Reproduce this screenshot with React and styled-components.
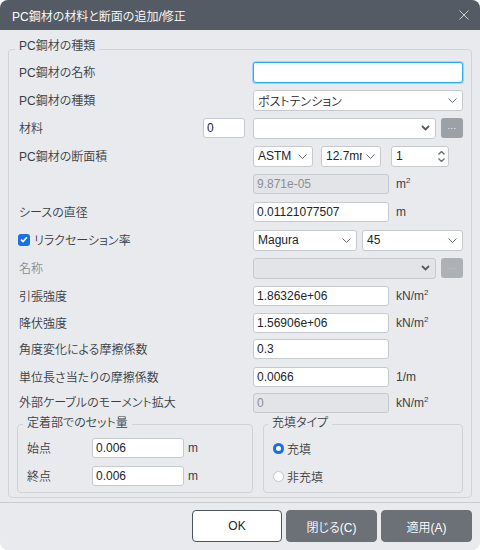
import React from "react";
import styled, { createGlobalStyle } from "styled-components";

const GlobalStyle = createGlobalStyle`
  * { box-sizing: border-box; }
  html, body { margin: 0; padding: 0; background: #fff; }
  body {
    font-family: "Liberation Sans", "Noto Sans CJK JP", sans-serif;
    font-size: 12px;
    font-weight: 350;
    font-feature-settings: "palt";
    color: #3a3f45;
  }
`;

const Dialog = styled.div`
  width: 480px;
  height: 550px;
  display: flex;
  flex-direction: column;
  background: #e9eaee;
  border-radius: 8px;
  overflow: hidden;
`;

const TitleBar = styled.div`
  flex: none;
  height: 30px;
  display: flex;
  align-items: center;
  justify-content: space-between;
  padding: 0 11px 0 12px;
  background: #545b64;
  color: #fff;
  font-size: 12px;
`;

const CloseButton = styled.button`
  display: flex;
  padding: 0;
  border: 0;
  background: none;
`;

const Body = styled.div`
  flex: 1;
  padding: 19px 8px 4px;
`;

const Group = styled.div`
  position: relative;
  border: 1px solid #cfd2d7;
  border-radius: 4px;
  padding: ${(p) => p.$pad};
`;

const Legend = styled.span`
  position: absolute;
  top: ${(p) => p.$top}px;
  left: ${(p) => p.$left}px;
  padding: 0 4px;
  line-height: 16px;
  background: #e9eaee;
  white-space: nowrap;
`;

const Row = styled.div`
  display: grid;
  grid-template-columns: 1fr 210px;
  align-items: center;
  height: ${(p) => p.$h || 28}px;
`;

const Label = styled.div`
  display: flex;
  align-items: center;
  justify-content: ${(p) => (p.$spread ? "space-between" : "flex-start")};
  gap: 4px;
  padding-bottom: ${(p) => p.$lift || 1}px;
  color: ${(p) => (p.$disabled ? "#8b8f94" : "#3a3f45")};
  white-space: nowrap;
`;

const Controls = styled.div`
  display: flex;
  align-items: center;
  gap: ${(p) => (p.$gap != null ? p.$gap : 5)}px;
`;

const Input = styled.input`
  flex: none;
  width: ${(p) => (p.$w ? `${p.$w}px` : "100%")};
  height: ${(p) => (p.$focus ? 21 : 20)}px;
  margin-right: ${(p) => p.$mr || 0}px;
  padding: 0 3px;
  border: 1px solid ${(p) => (p.$focus ? "#22aef0" : "#c6c9ce")};
  box-shadow: ${(p) => (p.$focus ? "0 0 0 1px rgba(34,174,240,0.35)" : "none")};
  border-radius: 3px;
  background: ${(p) => (p.disabled ? "#e3e4e7" : "#fff")};
  color: ${(p) => (p.disabled ? "#8b8f94" : "#212529")};
  font: inherit;
  outline: none;
`;

const Select = styled.div`
  flex: none;
  display: flex;
  align-items: center;
  width: ${(p) => (p.$w ? `${p.$w}px` : "100%")};
  height: 21px;
  padding: 0 5px 0 4px;
  border: 1px solid #c6c9ce;
  border-radius: 3px;
  background: ${(p) => (p.$disabled ? "#e3e4e7" : "#fff")};
  color: #212529;
`;

const SelectText = styled.span`
  flex: 1;
  min-width: 0;
  margin-right: 4px;
  overflow: hidden;
  white-space: nowrap;
`;

const DotsButton = styled.button`
  flex: none;
  width: 22px;
  height: 20px;
  padding: 0 0 4px;
  border: 0;
  border-radius: 3px;
  background: ${(p) => (p.disabled ? "#adb1b6" : "#9ca1a8")};
  color: ${(p) => (p.disabled ? "#c6c9cd" : "#f2f3f5")};
  font: inherit;
  font-size: 9px;
  letter-spacing: 0.5px;
`;

const Spinner = styled.div`
  flex: none;
  display: flex;
  align-items: center;
  width: 58px;
  height: 21px;
  margin-left: 2px;
  padding: 0 3px 0 4px;
  border: 1px solid #c6c9ce;
  border-radius: 3px;
  background: #fff;
  color: #212529;
`;

const SpinArrows = styled.div`
  margin-left: auto;
  display: flex;
  flex-direction: column;
  gap: 3px;
`;

const Unit = styled.span`
  margin-left: ${(p) => p.$ml || 2}px;
  white-space: nowrap;
  sup {
    font-size: 8px;
    vertical-align: 5px;
    line-height: 0;
  }
`;

const Check = styled.span`
  display: inline-flex;
  align-items: center;
  justify-content: center;
  width: 12px;
  height: 12px;
  margin-left: -1px;
  border-radius: 3px;
  background: #1a6fe6;
`;

const SubGrid = styled.div`
  display: grid;
  grid-template-columns: 236px 200px;
  gap: 10px;
  margin: 9px 0 0 -2px;
`;

const SubRow = styled.div`
  display: grid;
  grid-template-columns: 65px 92px auto;
  align-items: center;
  height: 28px;
`;

const RadioRow = styled.label`
  display: flex;
  align-items: center;
  gap: 3px;
  height: 28px;
`;

const Radio = styled.span`
  width: 11px;
  height: 11px;
  border-radius: 50%;
  background: ${(p) => (p.$on ? "#1a6fe6" : "#fff")};
  border: ${(p) => (p.$on ? "none" : "1px solid #c3c6cb")};
  box-shadow: ${(p) => (p.$on ? "inset 0 0 0 3px #1a6fe6, inset 0 0 0 6px #fff" : "none")};
`;

const Footer = styled.div`
  flex: none;
  display: flex;
  justify-content: flex-end;
  gap: 4px;
  padding: 7px 8px 8px;
  border-top: 1px solid #c8cbd0;
`;

const Button = styled.button`
  width: ${(p) => p.$w}px;
  height: 32px;
  border: 1px solid ${(p) => (p.$primary ? "#4d535a" : "#6c7178")};
  border-radius: 4px;
  background: ${(p) => (p.$primary ? "#fff" : "#6c7178")};
  color: ${(p) => (p.$primary ? "#212529" : "#fff")};
  font: inherit;
`;

const Chevron = ({ bold }) =>
  bold ? (
    <svg width="9" height="6" viewBox="0 0 9 6">
      <path d="M1 1L4.5 4.5L8 1" fill="none" stroke="#55595f" strokeWidth="1.8" />
    </svg>
  ) : (
    <svg width="9" height="5" viewBox="0 0 9 5">
      <path d="M0.5 0.5L4.5 4.5L8.5 0.5" fill="none" stroke="#6b6f75" strokeWidth="1" />
    </svg>
  );

const Dropdown = ({ w, value, bold, disabled }) => (
  <Select $w={w} $disabled={disabled}>
    <SelectText>{value}</SelectText>
    <Chevron bold={bold} />
  </Select>
);

const M2 = () => (
  <Unit>
    m<sup>2</sup>
  </Unit>
);

const KNM2 = () => (
  <Unit>
    kN/m<sup>2</sup>
  </Unit>
);

const App = () => {
  return (
    <>
      <GlobalStyle />
      <Dialog>
        <TitleBar>
          <span>PC鋼材の材料と断面の追加/修正</span>
          <CloseButton>
            <svg width="10" height="10" viewBox="0 0 10 10">
              <path d="M0.5 0.5L9.5 9.5M9.5 0.5L0.5 9.5" stroke="#c9ccd1" strokeWidth="1" />
            </svg>
          </CloseButton>
        </TitleBar>

        <Body>
          <Group $pad="8px 8px 4px 10px">
            <Legend $top={-12} $left={6}>PC鋼材の種類</Legend>

            <Row>
              <Label>PC鋼材の名称</Label>
              <Input $focus defaultValue="" />
            </Row>
            <Row>
              <Label>PC鋼材の種類</Label>
              <Dropdown value="ポストテンション" />
            </Row>
            <Row>
              <Label $spread>
                材料
                <Input $w={42} $mr={8} defaultValue="0" />
              </Label>
              <Controls>
                <Dropdown w={183} value="" bold />
                <DotsButton>...</DotsButton>
              </Controls>
            </Row>
            <Row>
              <Label>PC鋼材の断面積</Label>
              <Controls $gap={8}>
                <Dropdown w={60} value="ASTM A416" />
                <Dropdown w={60} value="12.7mm" />
                <Spinner>
                  1
                  <SpinArrows>
                    <svg width="7" height="4" viewBox="0 0 7 4">
                      <path d="M0.5 3.5L3.5 0.5L6.5 3.5" fill="none" stroke="#6b6f75" strokeWidth="1.4" />
                    </svg>
                    <svg width="7" height="4" viewBox="0 0 7 4">
                      <path d="M0.5 0.5L3.5 3.5L6.5 0.5" fill="none" stroke="#6b6f75" strokeWidth="1.4" />
                    </svg>
                  </SpinArrows>
                </Spinner>
              </Controls>
            </Row>
            <Row>
              <Label />
              <Controls>
                <Input $w={136} disabled defaultValue="9.871e-05" />
                <M2 />
              </Controls>
            </Row>
            <Row>
              <Label>シースの直径</Label>
              <Controls>
                <Input $w={136} defaultValue="0.01121077507" />
                <Unit>m</Unit>
              </Controls>
            </Row>
            <Row>
              <Label>
                <Check>
                  <svg width="8" height="7" viewBox="0 0 8 7">
                    <path d="M1 3.6L3 5.6L7 1.2" fill="none" stroke="#fff" strokeWidth="1.6" />
                  </svg>
                </Check>
                リラクセーション率
              </Label>
              <Controls>
                <Dropdown w={104} value="Magura" />
                <Dropdown w={101} value="45" />
              </Controls>
            </Row>
            <Row>
              <Label $disabled>名称</Label>
              <Controls>
                <Dropdown w={183} value="" bold disabled />
                <DotsButton disabled>...</DotsButton>
              </Controls>
            </Row>
            <Row>
              <Label>引張強度</Label>
              <Controls>
                <Input $w={136} defaultValue="1.86326e+06" />
                <KNM2 />
              </Controls>
            </Row>
            <Row $h={25}>
              <Label>降伏強度</Label>
              <Controls>
                <Input $w={136} defaultValue="1.56906e+06" />
                <KNM2 />
              </Controls>
            </Row>
            <Row>
              <Label>角度変化による摩擦係数</Label>
              <Controls>
                <Input $w={136} defaultValue="0.3" />
              </Controls>
            </Row>
            <Row>
              <Label>単位長さ当たりの摩擦係数</Label>
              <Controls>
                <Input $w={136} defaultValue="0.0066" />
                <Unit>1/m</Unit>
              </Controls>
            </Row>
            <Row $h={24}>
              <Label $lift={4}>外部ケーブルのモーメント拡大</Label>
              <Controls>
                <Input $w={136} disabled defaultValue="0" />
                <KNM2 />
              </Controls>
            </Row>

            <SubGrid>
              <Group $pad="9px 0 2px 9px">
                <Legend $top={-10} $left={5}>定着部でのセット量</Legend>
                <SubRow>
                  <Label>始点</Label>
                  <Input defaultValue="0.006" />
                  <Unit $ml={4}>m</Unit>
                </SubRow>
                <SubRow>
                  <Label>終点</Label>
                  <Input defaultValue="0.006" />
                  <Unit $ml={4}>m</Unit>
                </SubRow>
              </Group>
              <Group $pad="9px 0 2px 9px">
                <Legend $top={-10} $left={4}>充填タイプ</Legend>
                <RadioRow>
                  <Radio $on />
                  充填
                </RadioRow>
                <RadioRow>
                  <Radio />
                  非充填
                </RadioRow>
              </Group>
            </SubGrid>
          </Group>
        </Body>

        <Footer>
          <Button $primary $w={90}>OK</Button>
          <Button $w={91}>閉じる(C)</Button>
          <Button $w={91}>適用(A)</Button>
        </Footer>
      </Dialog>
    </>
  );
};

export default App;
